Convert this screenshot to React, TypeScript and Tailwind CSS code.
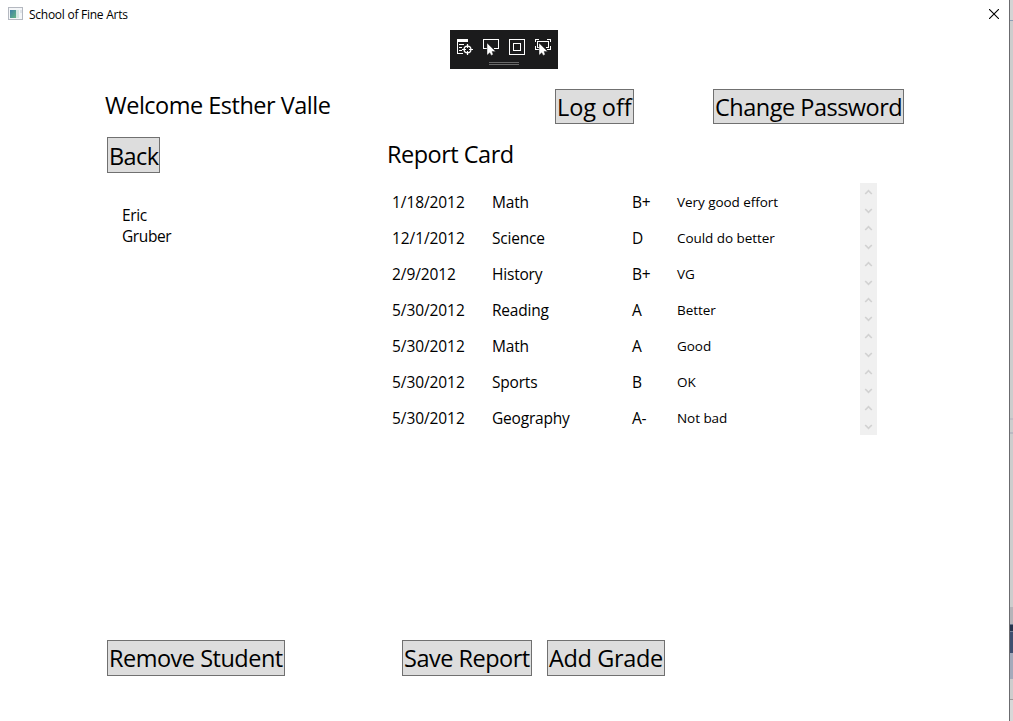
import React from "react";

const FONT = "font-['Segoe_UI','Open_Sans','Noto_Sans',sans-serif]";

type Grade = { date: string; subject: string; grade: string; comment: string };

const grades: Grade[] = [
  { date: "1/18/2012", subject: "Math", grade: "B+", comment: "Very good effort" },
  { date: "12/1/2012", subject: "Science", grade: "D", comment: "Could do better" },
  { date: "2/9/2012", subject: "History", grade: "B+", comment: "VG" },
  { date: "5/30/2012", subject: "Reading", grade: "A", comment: "Better" },
  { date: "5/30/2012", subject: "Math", grade: "A", comment: "Good" },
  { date: "5/30/2012", subject: "Sports", grade: "B", comment: "OK" },
  { date: "5/30/2012", subject: "Geography", grade: "A-", comment: "Not bad" },
];

function Button({ className, children }: { className: string; children: React.ReactNode }) {
  return (
    <button
      className={`block shrink-0 whitespace-nowrap border border-[#707070] bg-[#dddddd] pl-px text-left text-[23.5px] text-black ${className}`}
    >
      {children}
    </button>
  );
}

function AppIcon() {
  return (
    <svg width="16" height="14" viewBox="0 0 16 14" shapeRendering="crispEdges">
      <defs>
        <linearGradient id="pane" x1="0" y1="0" x2="1" y2="1">
          <stop offset="0" stopColor="#3d7fa6" />
          <stop offset="1" stopColor="#63b583" />
        </linearGradient>
      </defs>
      <rect x="0.5" y="0.5" width="14" height="12" fill="#f4f6f8" stroke="#b4b8c0" />
      <rect x="2" y="3" width="6" height="8" fill="url(#pane)" />
      <rect x="8" y="3" width="3" height="8" fill="#d3e6e2" />
      <rect x="12" y="3" width="2" height="3" fill="#dfe3e8" />
    </svg>
  );
}

function Pointer() {
  return <path d="M4 4V16.2L6.8 13.8L8.2 16.4L10.2 15.4L9 12.6H12.6Z" fill="#fff" stroke="#1b1b1c" strokeWidth="0.4" />;
}

function DebugToolbar() {
  return (
    <div className="h-[39px] w-[108px] bg-[#1b1b1c] pt-[9px]">
      <div className="flex gap-[10px] pl-[7px]">
        <svg width="16" height="17" viewBox="0 0 16 17" fill="none" stroke="#fff">
          <path d="M0 0H11V3H0Z" fill="#fff" stroke="none" />
          <path d="M0.5 3V14.5H6M2 5.5H7M2 8.5H5M2 11.5H5" shapeRendering="crispEdges" />
          <circle cx="10.5" cy="10.5" r="3.4" strokeWidth="1.3" />
          <path d="M10.5 5V9M10.5 12V16M5 10.5H9M12 10.5H16" strokeWidth="1.2" />
        </svg>
        <svg width="16" height="17" viewBox="0 0 16 17" fill="none" stroke="#fff">
          <path d="M4 9.5H0.5V0.5H15.5V9.5H11" shapeRendering="crispEdges" />
          <Pointer />
        </svg>
        <svg width="16" height="17" viewBox="0 0 16 17" fill="none" stroke="#fff" shapeRendering="crispEdges">
          <path d="M0.5 0.5H15.5V15.5H0.5Z M4.5 4.5H11.5V11.5H4.5Z" />
        </svg>
        <svg width="16" height="17" viewBox="0 0 16 17" fill="none" stroke="#fff">
          <path
            d="M0.5 3V0.5H4M12 0.5H15.5V3M0.5 7V10.5H4M15.5 7V10.5H12M5 8.5H2.5V2.5H13.5V8.5H11"
            shapeRendering="crispEdges"
          />
          <Pointer />
        </svg>
      </div>
      <div className="mt-[6px] ml-[39px] h-[3px] w-[30px] border-y border-[#6a6a6a]" />
    </div>
  );
}

function ScrollCell() {
  return (
    <svg width="17" height="36" viewBox="0 0 17 36" fill="none" stroke="#d2d2d2" strokeWidth="1.7">
      <path d="M5.2 11L8.5 7.7L11.8 11M5.2 26L8.5 29.3L11.8 26" />
    </svg>
  );
}

function BackgroundStrip() {
  return (
    <div className="flex h-[721px] w-[3px] flex-col bg-[#cdcdcd]">
      <div className="h-[20px] bg-[#d4d4d4]" />
      <div className="h-px bg-[#8d9db5]" />
      <div className="h-[397px]" />
      <div className="h-[2px] bg-[#bfbfc6]" />
      <div className="h-[12px]" />
      <div className="h-[2px] bg-[#b9b9c2]" />
      <div className="h-[173px]" />
      <div className="h-[17px] bg-[#b5b4b9]" />
      <div className="h-px bg-[#66738a]" />
      <div className="h-[6px] bg-[#26344e]" />
      <div className="h-px bg-[#77859b]" />
      <div className="h-[21px] bg-[#3f4f70]" />
      <div className="h-[26px] bg-[#a4aabb]" />
      <div className="h-[20px]" />
      <div className="h-px bg-[#999]" />
      <div className="grow bg-[#d8d8d8]" />
    </div>
  );
}

export default function App() {
  return (
    <div className={`flex h-[721px] w-[1013px] overflow-hidden bg-white text-black ${FONT}`}>
      <div className="flex w-[1010px] flex-col border-r border-[#6b6b6f]">
        <header className="flex h-[30px] items-start justify-between">
          <div className="flex pt-[7px] pl-2">
            <AppIcon />
            <span className="ml-[5px] text-[12px] leading-[16px] tracking-[-0.26px]">School of Fine Arts</span>
          </div>
          <svg className="mt-[9px] mr-[10px]" width="10" height="10" viewBox="0 0 10 10" stroke="#000" strokeWidth="1.1">
            <path d="M0 0L10 10M10 0L0 10" />
          </svg>
        </header>

        <div className="flex h-[59px] justify-center pr-[1px]">
          <DebugToolbar />
        </div>

        <div className="flex h-[48px]">
          <h1 className="w-[555px] pl-[105px] text-[23.5px] leading-[32px] tracking-[-0.5px]">Welcome Esther Valle</h1>
          <Button className="h-[35px] w-[79px] leading-[34px] tracking-[-0.1px]">Log off</Button>
          <Button className="ml-[79px] h-[35px] w-[191px] leading-[34px] tracking-[-0.5px]">Change Password</Button>
        </div>

        <main className="flex h-[503px]">
          <section className="w-[387px] pl-[107px]">
            <Button className="h-[36px] w-[53px] leading-[36px] tracking-[-0.6px]">Back</Button>
            <div className="mt-[32px] ml-[15px] text-[15.5px] leading-[21px] tracking-[-0.4px]">
              <p>Eric</p>
              <p>Gruber</p>
            </div>
          </section>
          <section className="w-[490px]">
            <h2 className="h-[46px] text-[23.5px] leading-[34px] tracking-[-0.5px]">Report Card</h2>
            {grades.map((g, i) => (
              <div key={i} className="flex h-[36px] pl-[5px] text-[15.5px] leading-[38px] tracking-[-0.2px]">
                <span className="w-[100px] tracking-[-0.08px]">{g.date}</span>
                <span className="w-[140px]">{g.subject}</span>
                <span className="w-[45px] font-medium">{g.grade}</span>
                <span className="w-[183px] text-[13.5px] tracking-[-0.05px]">{g.comment}</span>
                <div className="w-[17px] bg-[#f0f0f0]">
                  <ScrollCell />
                </div>
              </div>
            ))}
          </section>
        </main>

        <footer className="flex pl-[107px]">
          <Button className="h-[36px] w-[178px] leading-[34px] tracking-[-0.5px]">Remove Student</Button>
          <Button className="ml-[117px] h-[36px] w-[130px] leading-[34px] tracking-[-0.5px]">Save Report</Button>
          <Button className="ml-[15px] h-[36px] w-[118px] leading-[34px] tracking-[-0.35px]">Add Grade</Button>
        </footer>
      </div>
      <BackgroundStrip />
    </div>
  );
}
